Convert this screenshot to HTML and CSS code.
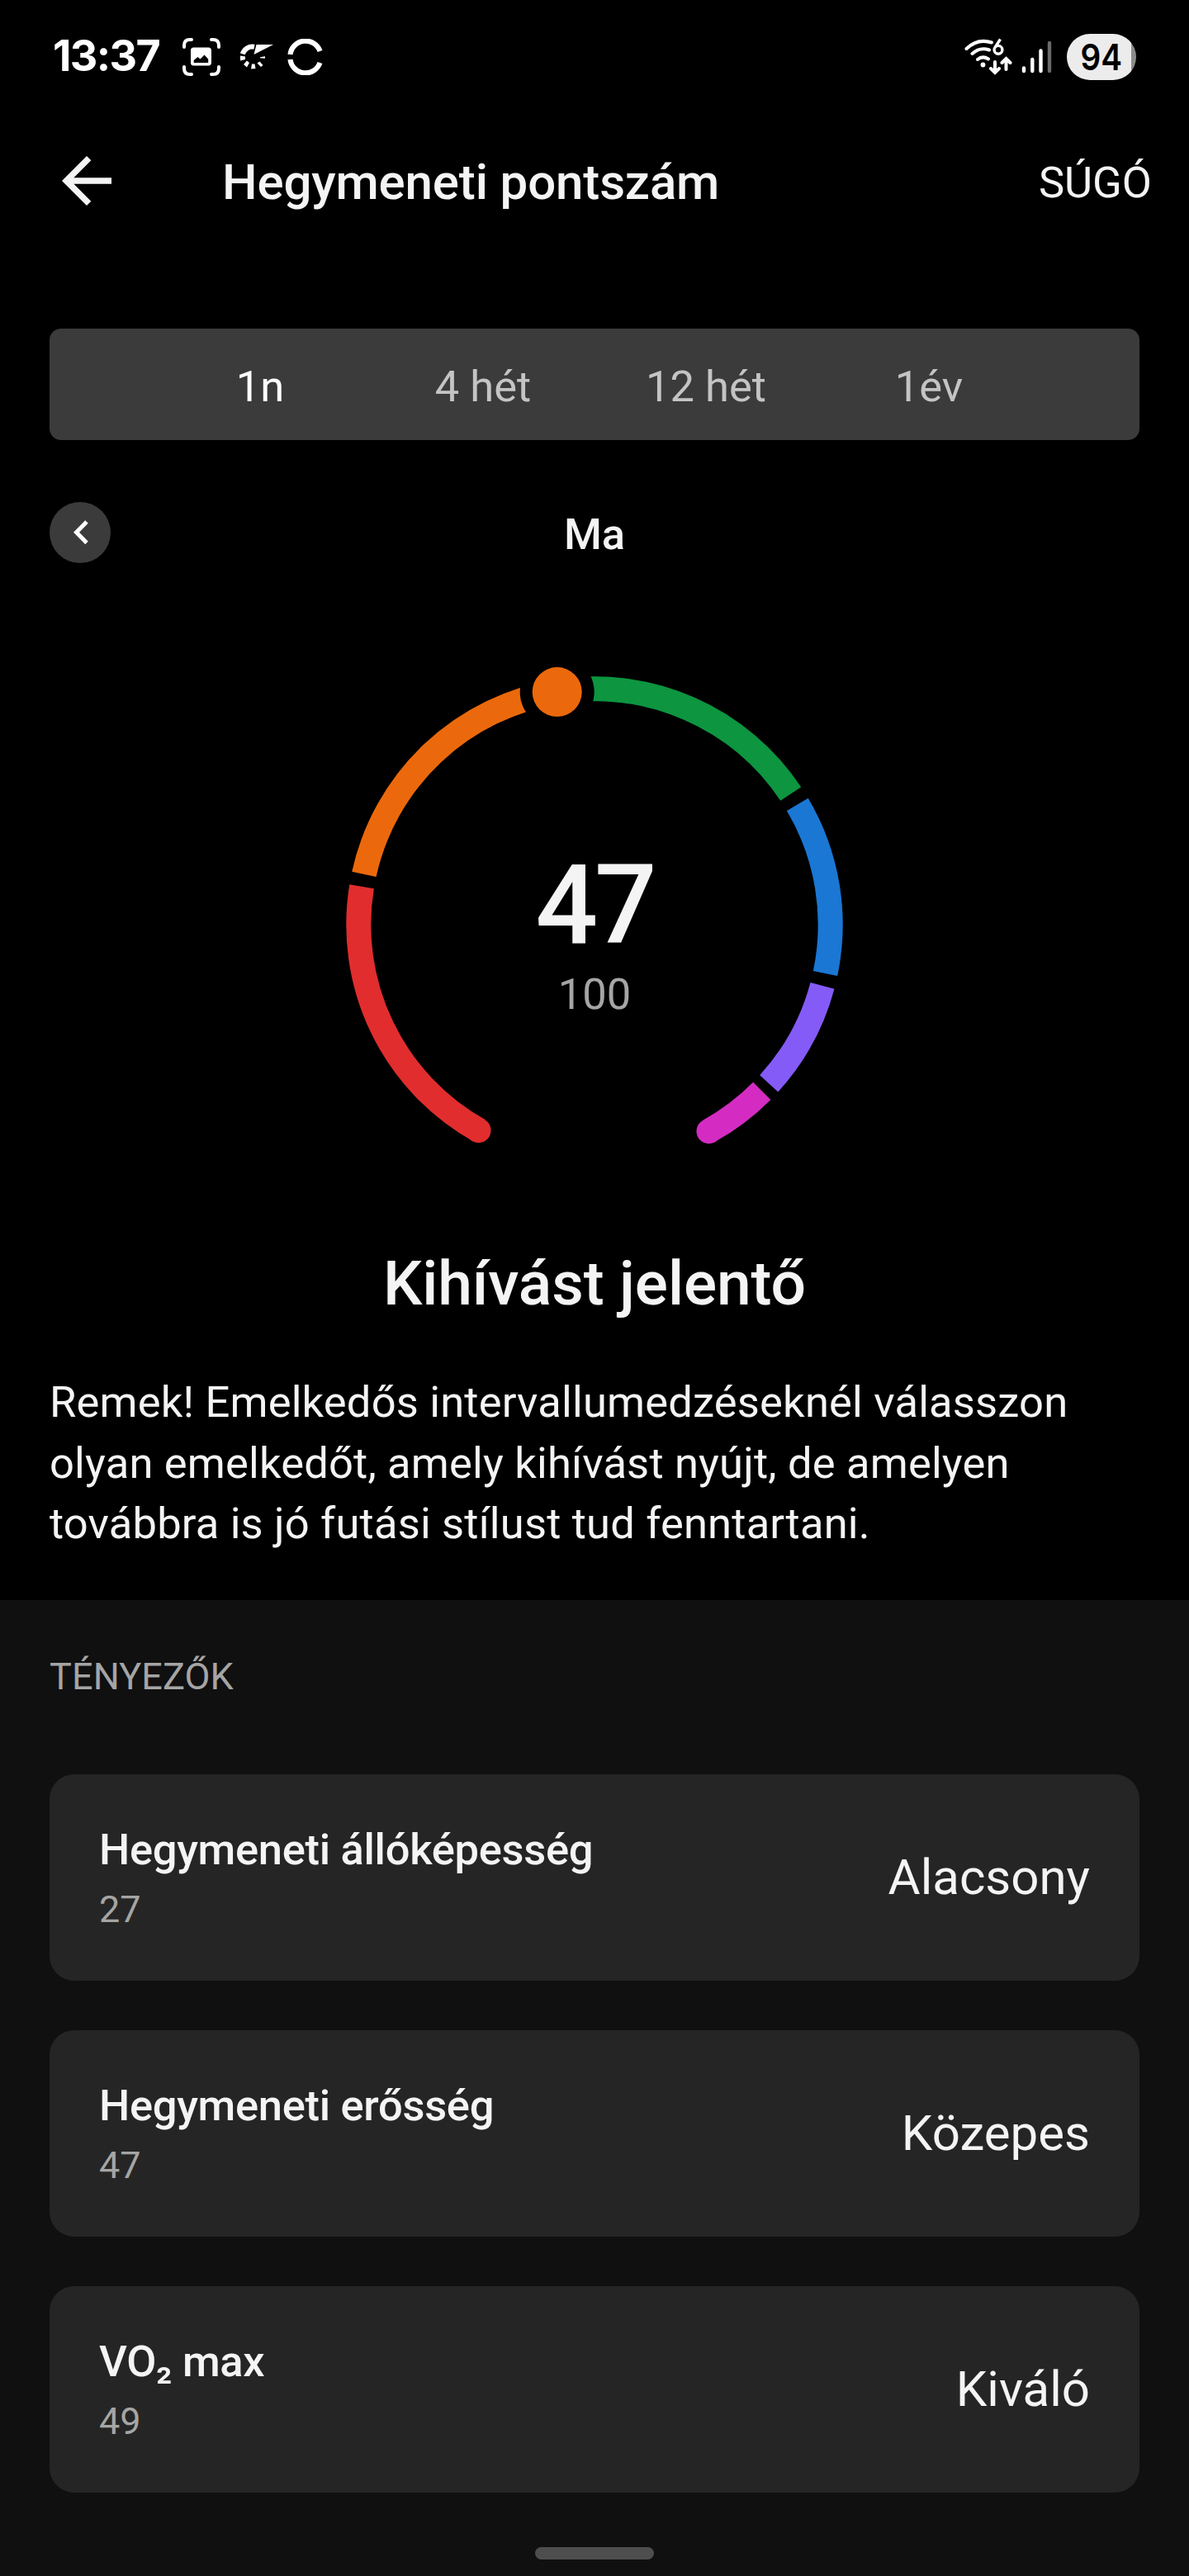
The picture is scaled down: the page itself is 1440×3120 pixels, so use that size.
FILE: index.html
```html
<!DOCTYPE html>
<html lang="hu">
<head>
<meta charset="utf-8">
<title>Hegymeneti pontszám</title>
<link rel="stylesheet" href="styles.css">
</head>
<body>
<div class="screen">
  <div class="status">
    <div class="status-left">
      <span class="clock">13:37</span>
      <svg class="ic-shot" viewBox="0 0 48 48" width="48" height="48">
        <g fill="none" stroke="#fff" stroke-width="4" stroke-linecap="round">
          <path d="M3 12V10Q3 3 10 3H12M36 3H38Q45 3 45 10V12M45 36V38Q45 45 38 45H36M12 45H10Q3 45 3 38V36"/>
        </g>
        <path fill="#fff" fill-rule="evenodd" d="M15.500 12.500H32.500Q36 12.500 36 16V31Q36 34.500 32.500 34.500H14.500Q11 34.500 11 31V16Q11 12.500 14.500 12.500ZM14.700 31H32.200V26.500L27.500 21.500L22.500 26.500L19.500 24L14.700 28Z"/>
      </svg>
      <svg class="ic-run" viewBox="0 0 42 32" width="42" height="32">
        <path d="M17.500 13L20.500 1H41Z" fill="#fff"/>
        <path d="M3.800 12.400A12.300 12.300 0 0 1 18 3.800" fill="none" stroke="#fff" stroke-width="6"/>
        <g fill="#fff">
          <path d="M1 14.500L7 15.500V19L1 20.500ZM5 25L9 20.500L12 23L9 28.500ZM14 30.500L15 24.500H18.500L19.500 30ZM21.500 23.500L24.500 21.500L28.500 26L26 28ZM25 16.300L31 15.300V17.700L25 17.300Z"/>
        </g>
      </svg>
      <svg class="ic-ring" viewBox="0 0 44 44" width="44" height="44">
        <g fill="none" stroke="#fff" stroke-width="6.200">
          <path d="M3.500 19A18.600 18.600 0 0 1 39.500 15"/>
          <path d="M3.500 25A18.600 18.600 0 0 0 39.500 29"/>
        </g>
      </svg>
    </div>
    <div class="status-right">
      <svg class="ic-wifi" viewBox="0 0 58 46" width="58" height="46">
        <g fill="none" stroke="#fff" stroke-width="4" stroke-linecap="round">
          <path d="M2.500 13Q16 0 33 5.500M9.500 19Q19 10.500 30 14.500M16 26Q22 21 29 25.500" />
          <path d="M37 29V41M32 37L37 42L42 37M50.500 38V26M45.500 30L50.500 25L55.500 30"/>
        </g>
        <circle cx="22.500" cy="32.500" r="2.900" fill="#fff"/>
        <g fill="none" stroke="#fff" stroke-width="3.400"><circle cx="41" cy="14.300" r="4.900"/><path d="M43.500 1.500L37 11.500"/></g>
      </svg>
      <svg class="ic-signal" viewBox="0 0 37 40" width="37" height="40">
        <g stroke="#fff" stroke-width="4.400" stroke-linecap="round">
          <path d="M3 33.500V37M13.300 23V37M23.500 12.500V37"/>
          <path d="M34 3V37" stroke="#6a6a6a"/>
        </g>
      </svg>
      <div class="battery"><span>94</span></div>
    </div>
  </div>

  <header class="bar">
    <svg class="back" viewBox="0 0 24 24" width="90" height="90"><path fill="#f4f4f4" d="M20 11H7.830l5.590-5.590L12 4l-8 8 8 8 1.410-1.410L7.830 13H20v-2z"/></svg>
    <h1>Hegymeneti pontszám</h1>
    <span class="help">SÚGÓ</span>
  </header>

  <nav class="tabs">
    <span class="tab active">1n</span>
    <span class="tab">4 hét</span>
    <span class="tab">12 hét</span>
    <span class="tab">1év</span>
  </nav>

  <div class="day">
    <span class="prev"><svg viewBox="0 0 74 74" width="74" height="74"><path d="M45 24L32.500 36.700L45 49.500" fill="none" stroke="#fff" stroke-width="5"/></svg></span>
    <span class="day-label">Ma</span>
  </div>

  <!-- arcs use a 360-unit path length, so dash lengths are degrees -->
  <svg class="gauge" viewBox="-320 -320 640 640" width="640" height="640">
    <g fill="none" stroke-width="30">
      <circle r="285.700" pathLength="360" stroke="#e12d2e" stroke-dasharray="70 290" transform="rotate(119.300)"/>
      <circle r="285.700" pathLength="360" stroke="#eb690c" stroke-dasharray="68.600 291.400" transform="rotate(-167.650)"/>
      <circle r="285.700" pathLength="360" stroke="#0d9540" stroke-dasharray="65.300 294.700" transform="rotate(-99)"/>
      <circle r="285.700" pathLength="360" stroke="#1a77d4" stroke-dasharray="42.550 317.450" transform="rotate(-30.630)"/>
      <circle r="285.700" pathLength="360" stroke="#855bf8" stroke-dasharray="27.350 332.650" transform="rotate(14.970)"/>
      <circle r="285.700" pathLength="360" stroke="#d42cc2" stroke-dasharray="16.150 343.850" transform="rotate(44.800)"/>
    </g>
    <circle cx="-140.500" cy="249.200" r="15" fill="#e12d2e"/>
    <circle cx="138.500" cy="250.200" r="15" fill="#d42cc2"/>
    <circle cx="-45.300" cy="-281.900" r="45" fill="#000"/>
    <circle cx="-45.300" cy="-281.900" r="30" fill="#eb690c"/>
    <text class="score" x="0" y="21.600">47</text>
    <text class="max" x="0" y="101.600">100</text>
  </svg>

  <h2 class="level">Kihívást jelentő</h2>
  <p class="advice">Remek! Emelkedős intervallumedzéseknél válasszon olyan emelkedőt, amely kihívást nyújt, de amelyen továbbra is jó futási stílust tud fenntartani.</p>

  <section class="factors">
    <h3>TÉNYEZŐK</h3>
    <div class="card"><div><div class="name">Hegymeneti állóképesség</div><div class="num">27</div></div><div class="value">Alacsony</div></div>
    <div class="card"><div><div class="name">Hegymeneti erősség</div><div class="num">47</div></div><div class="value">Közepes</div></div>
    <div class="card"><div><div class="name">VO₂ max</div><div class="num">49</div></div><div class="value">Kiváló</div></div>
    <div class="home"></div>
  </section>
</div>
</body>
</html>
```
FILE: styles.css
```css
* { box-sizing: border-box; }
body { margin: 0; background: #000; color: #f4f4f4; font-family: Roboto, "Liberation Sans", sans-serif; }
h1, h2, h3, p { margin: 0; font-weight: 400; }
svg { display: block; flex: none; }
.screen { width: 1440px; height: 3120px; display: flex; flex-direction: column; overflow: hidden; }

.status { height: 140px; display: flex; justify-content: space-between; padding: 0 64px 0 64px; flex: none; }
.status-left, .status-right { display: flex; height: 138px; align-items: center; }
.clock { font: 700 52px/60px Inter, sans-serif; letter-spacing: -1.600px; color: #fff; width: 156px; white-space: nowrap; margin-top: -2px; }
.ic-run { margin-left: 22px; }
.ic-ring { margin-left: 16px; }
.ic-signal { margin: 0 18px 0 11px; }
.battery {
  width: 84px; height: 56px; border-radius: 28px; color: #000;
  background: linear-gradient(90deg, #ececec 78.500px, #8c8c8c 78.500px);
  display: flex; align-items: center; justify-content: center;
  font: 600 44px/56px Inter, sans-serif;
}
.battery span { transform: scaleX(0.880); }

.bar { height: 161px; display: flex; align-items: center; padding: 0 45px 0 60px; flex: none; }
.back { margin-top: -3px; }
h1 { margin-left: 119px; font-size: 60px; font-weight: 500; line-height: 70px; letter-spacing: -0.150px; }
.help { margin-left: auto; font-size: 52.500px; line-height: 62px; }

.tabs {
  margin: 97px 60px 0; height: 135px; padding: 5px 120px 0; border-radius: 14px;
  background: #3b3b3b; display: grid; grid-template-columns: repeat(4, 270px); align-items: center; flex: none;
}
.tab { text-align: center; font-size: 52.500px; color: #c4c4c4; }
.tab.active { color: #fff; }

.day { margin: 75px 60px 0; height: 74px; display: grid; grid-template-columns: 74px 1fr 74px; align-items: center; flex: none; }
.prev { width: 74px; height: 74px; border-radius: 50%; background: #3b3b3b; }
.day-label { text-align: center; padding-top: 4px; font-size: 52.500px; font-weight: 500; }

.gauge { margin: 118.400px auto 0; }
.score { font-size: 133px; font-weight: 500; letter-spacing: -4px; fill: #f4f4f4; text-anchor: middle; }
.max { font-size: 52.500px; fill: #a5a5a5; text-anchor: middle; }

.level { margin-top: 70px; text-align: center; font-size: 75px; font-weight: 500; line-height: 88px; letter-spacing: -0.100px; }
.advice { margin: 64px 60px 0; font-size: 52.500px; line-height: 73.125px; letter-spacing: 0.170px; }

.factors { margin-top: 56px; padding: 66px 60px 0; background: #101010; flex: 1; display: flex; flex-direction: column; }
h3 { font-size: 45px; line-height: 53px; color: #a5a5a5; margin-bottom: 92px; letter-spacing: 0.100px; }
.card {
  height: 250px; flex: none; margin-bottom: 60px; padding: 0 60px; border-radius: 30px;
  background: #252525; display: flex; align-items: center; justify-content: space-between;
}
.name { font-size: 52.500px; line-height: 62px; font-weight: 500; letter-spacing: -0.310px; }
.num { margin-top: 15px; font-size: 45px; line-height: 53px; color: #a5a5a5; }
.value { font-size: 60px; line-height: 70px; }
.home { width: 144px; height: 15px; margin: 6px auto 0; border-radius: 8px; background: #4e4e4e; flex: none; }
```
